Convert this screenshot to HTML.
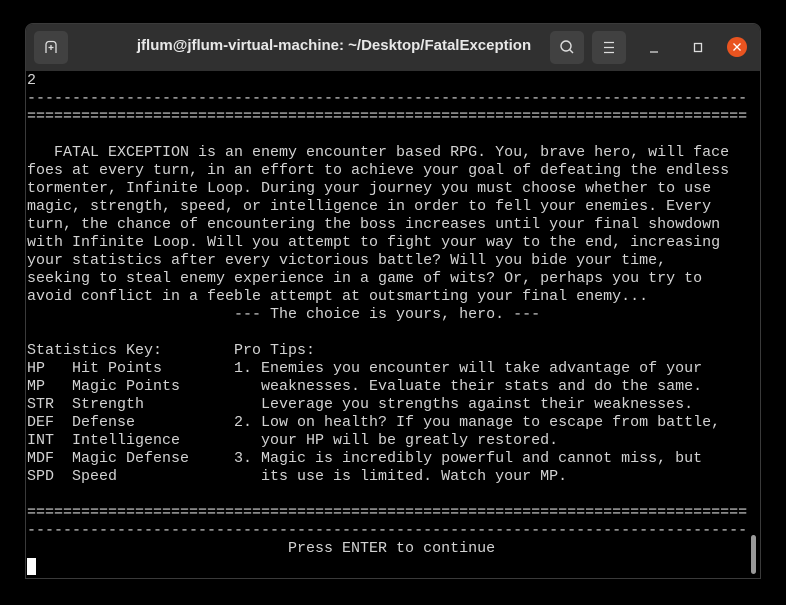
<!DOCTYPE html>
<html><head><meta charset="utf-8"><style>
html,body{margin:0;padding:0;background:#000;width:786px;height:605px;overflow:hidden}
.win{position:absolute;left:25px;top:23px;width:734px;height:554px;background:#000;border:1px solid #3a3a3a;border-radius:8px 8px 0 0;overflow:hidden}
.tb{position:absolute;left:0;top:0;width:734px;height:47px;background:#303030}
.btn{position:absolute;top:7px;width:34px;height:33px;background:#414141;border-radius:5px}
.title{position:absolute;left:58px;top:13px;width:500px;text-align:center;color:#e8e8e8;font:bold 15px "Liberation Sans",sans-serif;white-space:nowrap}
.term{position:absolute;left:1px;top:48px;margin:0;color:#d3d3d3;font:15px/18px "Liberation Mono",monospace;white-space:pre}
.cur{display:inline-block;width:9px;height:17px;background:#fff;vertical-align:top}
.sb{position:absolute;left:725px;top:511px;width:5px;height:39px;background:#9a9a9a;border-radius:3px}
</style></head><body>
<div class="win">
<div class="tb">
<div class="btn" style="left:8px"><svg width="34" height="33"><path d="M12 22V13.5a3 3 0 0 1 3-3h4a3 3 0 0 1 3 3V22M14.5 16.5h5M17 14v5" stroke="#ddd" stroke-width="1.3" fill="none"/></svg></div>
<div class="title">jflum@jflum-virtual-machine: ~/Desktop/FatalException</div>
<div class="btn" style="left:524px"><svg width="34" height="33"><circle cx="16" cy="15" r="5" stroke="#ddd" stroke-width="1.4" fill="none"/><path d="M19.5 18.5l3.5 3.5" stroke="#ddd" stroke-width="1.4"/></svg></div>
<div class="btn" style="left:566px"><svg width="34" height="33"><path d="M12 11.5h10M12 16.5h10M12 21.5h10" stroke="#ddd" stroke-width="1.2"/></svg></div>
<svg style="position:absolute;left:620px;top:10px" width="110" height="28"><path d="M4 18h8" stroke="#ddd" stroke-width="1.3"/><rect x="48.5" y="9.5" width="7" height="8" stroke="#ddd" stroke-width="1.3" fill="none"/><circle cx="91" cy="13" r="10" fill="#e95420"/><path d="M87.5 9.5l7 7M94.5 9.5l-7 7" stroke="#fff" stroke-width="1.3"/></svg>
</div>
<pre class="term">2
--------------------------------------------------------------------------------
================================================================================

   FATAL EXCEPTION is an enemy encounter based RPG. You, brave hero, will face
foes at every turn, in an effort to achieve your goal of defeating the endless
tormenter, Infinite Loop. During your journey you must choose whether to use
magic, strength, speed, or intelligence in order to fell your enemies. Every
turn, the chance of encountering the boss increases until your final showdown
with Infinite Loop. Will you attempt to fight your way to the end, increasing
your statistics after every victorious battle? Will you bide your time,
seeking to steal enemy experience in a game of wits? Or, perhaps you try to
avoid conflict in a feeble attempt at outsmarting your final enemy...
                       --- The choice is yours, hero. ---

Statistics Key:        Pro Tips:
HP   Hit Points        1. Enemies you encounter will take advantage of your
MP   Magic Points         weaknesses. Evaluate their stats and do the same.
STR  Strength             Leverage you strengths against their weaknesses.
DEF  Defense           2. Low on health? If you manage to escape from battle,
INT  Intelligence         your HP will be greatly restored.
MDF  Magic Defense     3. Magic is incredibly powerful and cannot miss, but
SPD  Speed                its use is limited. Watch your MP.

================================================================================
--------------------------------------------------------------------------------
                             Press ENTER to continue
<span class="cur"></span></pre>
<div class="sb"></div>
</div>
</body></html>
